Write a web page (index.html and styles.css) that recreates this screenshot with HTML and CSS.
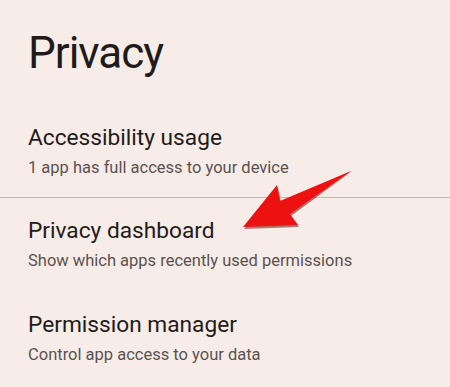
FILE: index.html
```html
<!DOCTYPE html>
<html lang="en">
<head>
    <meta charset="UTF-8">
    <meta name="viewport" content="width=device-width, initial-scale=1.0">
    <title>Privacy</title>
    <link rel="stylesheet" href="styles.css">
</head>
<body>

    <!-- Header -->
    <h1 class="page-title">Privacy</h1>

    <!-- Settings list -->
    <div class="settings">
        <div class="item">
            <div class="item-title">Accessibility usage</div>
            <div class="item-summary">1 app has full access to your device</div>
        </div>

        <div class="divider"></div>

        <div class="item">
            <div class="item-title">Privacy dashboard</div>
            <div class="item-summary">Show which apps recently used permissions</div>
        </div>

        <div class="item">
            <div class="item-title">Permission manager</div>
            <div class="item-summary">Control app access to your data</div>
        </div>
    </div>

    <!-- Pointer arrow -->
    <svg class="arrow" width="450" height="387" viewBox="0 0 450 387">
        <polygon points="244,229 278,187 281,203 352,171 291,216 299,227" fill="#7a1010" opacity="0.55"/>
        <polygon points="243,227 277,185 280,201 351,171 290,214 298,225" fill="#ee1111"/>
    </svg>

</body>
</html>
```

FILE: styles.css
```css
* {
    margin: 0;
    padding: 0;
    box-sizing: border-box;
}

body {
    font-family: Roboto, "Open Sans", sans-serif;
    background-color: #f8ece8;
    color: #1f1b1a;
    width: 450px;
    height: 387px;
    overflow: hidden;
    position: relative;
}

.page-title {
    font-size: 44px;
    font-weight: 400;
    line-height: 54px;
    padding: 26px 28px 0;
    letter-spacing: -1px;
}

.settings {
    margin-top: 43px;
}

.item {
    padding: 0 28px;
}

.item-title {
    font-size: 22.7px;
    line-height: 30px;
    color: #1f1b1a;
}

.item-summary {
    font-size: 16.5px;
    line-height: 26px;
    margin-top: 2px;
    color: #5a5250;
}

.divider {
    height: 1px;
    background-color: #c4b8b4;
    margin: 16px 0 18px;
}

.item + .item {
    margin-top: 36px;
}

.arrow {
    position: absolute;
    top: 0;
    left: 0;
}
```
